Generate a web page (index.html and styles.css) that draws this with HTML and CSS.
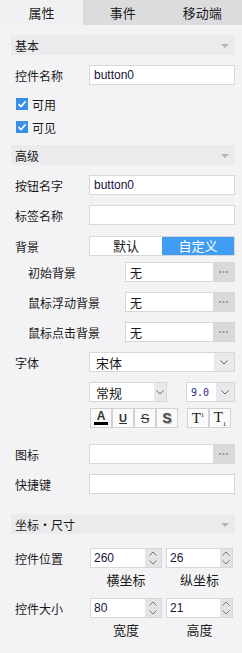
FILE: index.html
```html
<!DOCTYPE html>
<html>
<head>
<meta charset="utf-8">
<title>属性面板</title>
<link rel="stylesheet" href="styles.css">
</head>
<body>
<div class="tabs">
	<div class="tab active">属性</div>
	<div class="tab">事件</div>
	<div class="tab">移动端</div>
</div>
<div class="panel">
	<!-- 基本 -->
	<div class="sechead">基本<span class="tri"></span></div>
	<div class="row r10">
		<div class="lbl">控件名称</div>
		<div class="field"><span class="txt">button0</span></div>
	</div>
	<div class="chk c13"><span class="box"><svg width="12" height="12" viewBox="0 0 12 12"><path d="M2.5 6.2 L5 8.6 L9.6 3.4" fill="none" stroke="#fff" stroke-width="1.6"/></svg></span>可用</div>
	<div class="chk c11"><span class="box"><svg width="12" height="12" viewBox="0 0 12 12"><path d="M2.5 6.2 L5 8.6 L9.6 3.4" fill="none" stroke="#fff" stroke-width="1.6"/></svg></span>可见</div>

	<!-- 高级 -->
	<div class="sechead s12">高级<span class="tri"></span></div>
	<div class="row r10">
		<div class="lbl">按钮名字</div>
		<div class="field"><span class="txt">button0</span></div>
	</div>
	<div class="row r10">
		<div class="lbl">标签名称</div>
		<div class="field"></div>
	</div>
	<div class="row r11">
		<div class="lbl">背景</div>
		<div class="toggle">
			<div class="opt">默认</div>
			<div class="opt on">自定义</div>
		</div>
	</div>
	<div class="row r6">
		<div class="lbl sub">初始背景</div>
		<div class="field pick"><span class="val">无</span><span class="more"><svg width="9" height="2" viewBox="0 0 9 2"><rect x="0" y="0" width="2" height="2" fill="#9c9c9e"/><rect x="3.5" y="0" width="2" height="2" fill="#9c9c9e"/><rect x="7" y="0" width="2" height="2" fill="#9c9c9e"/></svg></span></div>
	</div>
	<div class="row r10">
		<div class="lbl sub">鼠标浮动背景</div>
		<div class="field pick"><span class="val">无</span><span class="more"><svg width="9" height="2" viewBox="0 0 9 2"><rect x="0" y="0" width="2" height="2" fill="#9c9c9e"/><rect x="3.5" y="0" width="2" height="2" fill="#9c9c9e"/><rect x="7" y="0" width="2" height="2" fill="#9c9c9e"/></svg></span></div>
	</div>
	<div class="row r10">
		<div class="lbl sub">鼠标点击背景</div>
		<div class="field pick"><span class="val">无</span><span class="more"><svg width="9" height="2" viewBox="0 0 9 2"><rect x="0" y="0" width="2" height="2" fill="#9c9c9e"/><rect x="3.5" y="0" width="2" height="2" fill="#9c9c9e"/><rect x="7" y="0" width="2" height="2" fill="#9c9c9e"/></svg></span></div>
	</div>
	<div class="row r10">
		<div class="lbl">字体</div>
		<div class="select wide"><span class="val">宋体</span><span class="drop"><svg width="8" height="5" viewBox="0 0 8 5"><path d="M0.5 0.5 L4 4 L7.5 0.5" fill="none" stroke="#666" stroke-width="1"/></svg></span></div>
	</div>
	<div class="row r10 indent">
		<div class="select style"><span class="val">常规</span><span class="drop"><svg width="8" height="5" viewBox="0 0 8 5"><path d="M0.5 0.5 L4 4 L7.5 0.5" fill="none" stroke="#666" stroke-width="1"/></svg></span></div>
		<div class="select size"><span class="val num">9.0</span><span class="drop"><svg width="8" height="5" viewBox="0 0 8 5"><path d="M0.5 0.5 L4 4 L7.5 0.5" fill="none" stroke="#666" stroke-width="1"/></svg></span></div>
	</div>
	<div class="btnrow r6">
		<div class="sbtn"><span class="fa">A</span><span class="bar"></span></div>
		<div class="sbtn"><span class="fu">U</span></div>
		<div class="sbtn"><span class="fs">S</span></div>
		<div class="sbtn"><span class="fsh">S</span></div>
		<div class="sbtn gap"><span class="ft">T<sup>1</sup></span></div>
		<div class="sbtn"><span class="ft">T<sub>1</sub></span></div>
	</div>
	<div class="row r16">
		<div class="lbl">图标</div>
		<div class="field pick"><span class="val"></span><span class="more"><svg width="9" height="2" viewBox="0 0 9 2"><rect x="0" y="0" width="2" height="2" fill="#9c9c9e"/><rect x="3.5" y="0" width="2" height="2" fill="#9c9c9e"/><rect x="7" y="0" width="2" height="2" fill="#9c9c9e"/></svg></span></div>
	</div>
	<div class="row r10">
		<div class="lbl">快捷键</div>
		<div class="field"></div>
	</div>

	<!-- 坐标·尺寸 -->
	<div class="sechead s20">坐标・尺寸<span class="tri"></span></div>
	<div class="row r14">
		<div class="lbl">控件位置</div>
		<div class="spin first"><span class="txt">260</span><span class="arrows"><svg width="8" height="14" viewBox="0 0 8 14"><path d="M0.5 4.5 L4 1 L7.5 4.5 M0.5 9.5 L4 13 L7.5 9.5" fill="none" stroke="#777" stroke-width="1"/></svg></span></div>
		<div class="spin second"><span class="txt">26</span><span class="arrows"><svg width="8" height="14" viewBox="0 0 8 14"><path d="M0.5 4.5 L4 1 L7.5 4.5 M0.5 9.5 L4 13 L7.5 9.5" fill="none" stroke="#777" stroke-width="1"/></svg></span></div>
	</div>
	<div class="caps">
		<div class="cap first">横坐标</div>
		<div class="cap second">纵坐标</div>
	</div>
	<div class="row r10">
		<div class="lbl">控件大小</div>
		<div class="spin first"><span class="txt">80</span><span class="arrows"><svg width="8" height="14" viewBox="0 0 8 14"><path d="M0.5 4.5 L4 1 L7.5 4.5 M0.5 9.5 L4 13 L7.5 9.5" fill="none" stroke="#777" stroke-width="1"/></svg></span></div>
		<div class="spin second"><span class="txt">21</span><span class="arrows"><svg width="8" height="14" viewBox="0 0 8 14"><path d="M0.5 4.5 L4 1 L7.5 4.5 M0.5 9.5 L4 13 L7.5 9.5" fill="none" stroke="#777" stroke-width="1"/></svg></span></div>
	</div>
	<div class="caps">
		<div class="cap first">宽度</div>
		<div class="cap second">高度</div>
	</div>
</div>
</body>
</html>
```
FILE: styles.css
```css
html, body {
	margin: 0;
	background: #f3f3f5;
	font-family: "Noto Sans CJK SC", "Liberation Sans", sans-serif;
	font-size: 12px;
	color: #1a1a1a;
}
.tabs {
	display: flex;
	height: 25px;
	background: #dcdcdf;
}
.tab {
	flex: 1;
	line-height: 25px;
	text-align: center;
	font-size: 13px;
}
.tab.active {
	flex: 0 0 83px;
	background: #f1f1f3;
}
.panel {
	padding: 0 7px 40px 11px;
}
.sechead {
	display: flex;
	align-items: center;
	justify-content: space-between;
	height: 20px;
	margin-top: 10px;
	padding: 0 6px 0 4px;
	background: #ebebed;
}
.s12 { margin-top: 12px; }
.s20 { margin-top: 20px; }
.tri {
	width: 0;
	height: 0;
	border-left: 4px solid transparent;
	border-right: 4px solid transparent;
	border-top: 4px solid #b4b4b6;
	margin-top: 2px;
}
.row {
	display: flex;
	align-items: center;
	height: 20px;
}
.r6 { margin-top: 6px; }
.r10 { margin-top: 10px; }
.r11 { margin-top: 11px; }
.r14 { margin-top: 14px; }
.r16 { margin-top: 16px; }
.indent { padding-left: 78px; }
.lbl {
	flex: 0 0 74px;
	padding-left: 4px;
	white-space: nowrap;
}
.lbl.sub {
	flex: 0 0 97px;
	padding-left: 17px;
}
.field {
	flex: 1;
	display: flex;
	align-items: center;
	height: 20px;
	box-sizing: border-box;
	border: 1px solid #d7d7d9;
	background: #fff;
}
.txt {
	padding-left: 4px;
	font-family: "Liberation Sans", sans-serif;
	font-size: 12px;
	color: #14143c;
}
.pick .val {
	flex: 1;
	padding-left: 4px;
}
.more {
	display: flex;
	align-items: center;
	justify-content: center;
	width: 21px;
	height: 18px;
	background: #d9d9db;
}
.chk {
	display: flex;
	align-items: center;
	height: 12px;
	padding-left: 5px;
}
.c13 { margin-top: 13px; }
.c11 { margin-top: 11px; }
.box {
	display: inline-flex;
	width: 12px;
	height: 12px;
	margin-right: 4px;
	background: #3b8ee8;
}
.toggle {
	flex: 1;
	display: flex;
	height: 20px;
	box-sizing: border-box;
	border: 1px solid #d7d7d9;
	background: #fff;
}
.opt {
	flex: 1;
	text-align: center;
	line-height: 18px;
	font-size: 13px;
}
.opt.on {
	background: #3f9ef3;
	color: #fff;
}
.select {
	display: flex;
	align-items: center;
	height: 20px;
	box-sizing: border-box;
	border: 1px solid #d7d7d9;
	background: #fff;
}
.select .val {
	flex: 1;
	padding-left: 6px;
	font-size: 13px;
}
.select .drop {
	display: flex;
	align-items: center;
	justify-content: center;
	width: 20px;
	height: 18px;
	background: #e9e9eb;
}
.select.wide { flex: 1; }
.select.style { width: 78px; }
.select.style .drop { width: 12px; }
.select.size {
	width: 49px;
	margin-left: 19px;
}
.select.size .drop { width: 18px; }
.val.num {
	padding-left: 4px;
	font-family: "DejaVu Sans Mono", monospace;
	font-size: 10px;
	color: #1c2a8c;
}
.btnrow {
	display: flex;
	height: 20px;
	padding-left: 79px;
}
.sbtn {
	position: relative;
	width: 22px;
	height: 20px;
	box-sizing: border-box;
	border: 1px solid #d2d2d4;
	background: #fafafa;
	display: flex;
	align-items: center;
	justify-content: center;
	font-family: "Liberation Sans", sans-serif;
	font-weight: bold;
	color: #333;
}
.sbtn.gap { margin-left: 9px; }
.fa {
	font-size: 12px;
	margin-top: -4px;
}
.bar {
	position: absolute;
	left: 3px;
	right: 3px;
	bottom: 2px;
	height: 3px;
	background: #000;
}
.fu {
	font-size: 11px;
	text-decoration: underline;
}
.fs {
	font-size: 13px;
	font-weight: normal;
	text-decoration: line-through;
}
.fsh {
	font-size: 14px;
	color: #4a4a4a;
	text-shadow: 1px 1px 1px #aaa;
}
.ft {
	font-family: "Liberation Serif", serif;
	font-size: 15px;
	font-weight: normal;
	color: #222;
}
.ft sup, .ft sub {
	font-size: 7px;
}
.spin {
	display: flex;
	align-items: center;
	height: 20px;
	box-sizing: border-box;
	border: 1px solid #d7d7d9;
	background: #fff;
}
.spin .txt {
	flex: 1;
	padding-left: 3px;
	font-size: 12px;
	color: #14143c;
}
.spin.first { width: 72px; margin-left: 1px; }
.spin.second { width: 67px; margin-left: 4px; }
.arrows {
	display: flex;
	align-items: center;
	justify-content: center;
	width: 16px;
	height: 18px;
	background: #e3e3e5;
}
.spin.second .arrows { width: 12px; }
.caps {
	display: flex;
	height: 16px;
	margin-top: 4px;
	padding-left: 79px;
	font-size: 13px;
	line-height: 16px;
}
.cap { text-align: center; }
.cap.first { width: 72px; }
.cap.second { width: 67px; margin-left: 4px; }
```
